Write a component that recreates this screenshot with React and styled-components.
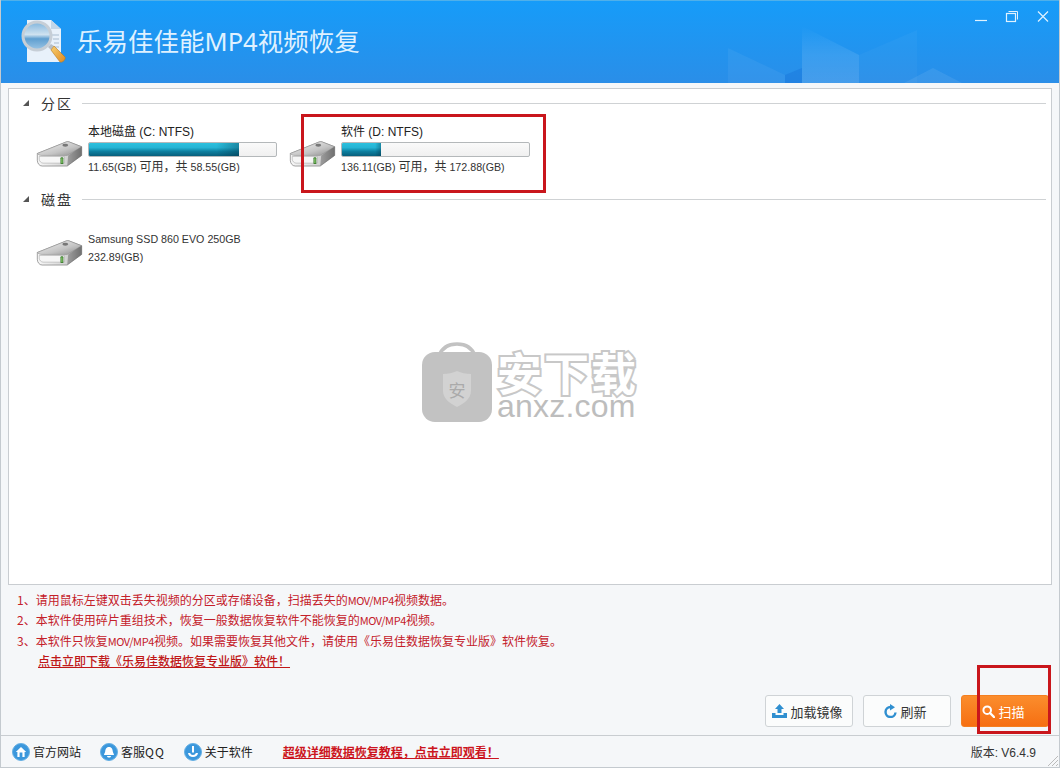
import React from 'react';
import styled, { createGlobalStyle } from 'styled-components';

const CJK = `"Liberation Sans", "Noto Sans CJK SC", sans-serif`;

const Global = createGlobalStyle`
  html, body { margin: 0; padding: 0; background: #f5f7f9; }
  * { box-sizing: border-box; }
`;

const Win = styled.div`
  position: relative; width: 1060px; height: 768px; overflow: hidden;
  display: flex; flex-direction: column;
  background: #f5f7f9; font-family: ${CJK}; color: #222;
  border-left: 1px solid #c4cacf; border-right: 1px solid #c4cacf; border-bottom: 1px solid #c4cacf;
`;
const Header = styled.header`
  position: relative; flex: 0 0 83px; display: flex; align-items: center;
  padding: 0 0 0 20px; gap: 10px; overflow: hidden;
  background: linear-gradient(180deg, #169cf9 0%, #2a8ee8 100%);
  border-top: 1px solid #4fb0ea;
`;
const Title = styled.h1`
  position: relative; margin: 0; font-size: 25.5px; font-weight: 400; color: #dff1ff; line-height: 1; letter-spacing: 0;
  font-family: "Noto Sans", "Noto Sans CJK SC", sans-serif;
`;
const LogoSvg = styled.svg`position: relative; flex: none;`;
const Decor = styled.svg`position: absolute; left: 0; top: 0;`;
const WinControls = styled.div`
  position: absolute; top: 9px; right: 9px; display: flex; gap: 17px; align-items: flex-start;
`;
const Main = styled.main`
  flex: none; height: 652px; display: flex; flex-direction: column; padding: 5px 7px 0;
`;
const Panel = styled.section`
  position: relative; flex: 0 0 497px; background: #fff; border: 1px solid #c9cdd1; padding: 5px 5px 0 14px;
`;
const SectionHead = styled.div`
  display: flex; align-items: center; height: 18px;
`;
const Caret = styled.span`
  width: 0; height: 0; margin-right: 12px;
  border-left: 6px solid transparent; border-bottom: 6px solid #555;
`;
const SectionTitle = styled.span`
  font-size: 14px; letter-spacing: 2px; color: #333; width: 41px; white-space: nowrap;
  font-family: "Noto Sans CJK SC", sans-serif;
`;
const SectionRule = styled.span`flex: 1; height: 1px; background: #cfd2d4;`;
const Drives = styled.div`
  display: flex; height: ${p => p.$h}px; padding: ${p => p.$top}px 0 0 13px;
`;
const Drive = styled.div`
  width: 253px; display: flex; align-items: flex-start; gap: 5px;
`;
const DiskIcon = styled.svg`flex: none; margin-top: ${p => p.$top}px;`;
const DriveInfo = styled.div`width: 190px;`;
const DriveName = styled.div`
  font-size: 12px; line-height: 15px; height: 15px; color: #222; white-space: nowrap;
`;
const Bar = styled.div`
  width: 189px; height: 15px; margin: 2px 0 2px; border: 1px solid #b4b8ba; border-radius: 2px;
  background: linear-gradient(180deg, #fafafa, #f0f0f0); overflow: hidden;
`;
const BarFill = styled.div`
  height: 100%;
  background:
    linear-gradient(90deg, rgba(0,40,60,0) 85%, rgba(0,40,60,.35) 100%),
    linear-gradient(180deg, #2cc0de 0%, #25b4d4 35%, #0d7f9f 65%, #075f7c 100%);
`;
const DriveSub = styled.div`
  font-size: 10.7px; line-height: 16px; color: #333; white-space: nowrap; margin-top: ${p => p.$gap || 0}px;
`;
const DriveSubCn = styled.span`font-size: 12px;`;
const Watermark = styled.div`
  position: absolute; left: 413px; top: 253px; display: flex; gap: 5px; pointer-events: none;
`;
const WmText = styled.div`display: flex; flex-direction: column; margin-top: 8px;`;
const WmCn = styled.div`
  font-family: "Noto Sans CJK SC", sans-serif; font-weight: 700; font-size: 45px; line-height: 44px; letter-spacing: 2px;
  color: #fff; -webkit-text-stroke: 4px #c8c8c8; paint-order: stroke fill; white-space: nowrap;
`;
const WmEn = styled.div`
  font-family: "Liberation Sans", sans-serif; font-size: 32px; line-height: 24px; color: #bdbdbd; white-space: nowrap; letter-spacing: .2px;
`;
const Notes = styled.div`
  padding: 5px 0 0 9px; height: 110px; font-size: 12px; color: #c4202a;
  font-family: "Noto Sans CJK SC", sans-serif;
`;
const NoteLine = styled.div`
  height: 20.3px; line-height: 20px; white-space: nowrap;
`;
const Narrow = styled.span`font-size: 11px; letter-spacing: -.4px;`;
const NoteLink = styled.a`
  margin-left: 21px; color: #c01818; text-decoration: underline; font-weight: 500;
`;
const Actions = styled.div`
  display: flex; justify-content: flex-end; gap: 10px; padding-right: 3px; height: 39px;
`;
const Btn = styled.button`
  width: ${p => p.$w || 88}px; height: 32px; display: flex; align-items: center; justify-content: center; gap: 3px;
  border-radius: 3px; font-size: 13px; padding: 0 3px 0 0;
  font-family: "Noto Sans CJK SC", sans-serif;
  color: ${p => p.$primary ? '#fff' : '#333'};
  border: 1px solid ${p => p.$primary ? '#f47f20' : '#cfd3d6'};
  background: ${p => p.$primary ? 'linear-gradient(180deg,#fb8d2d,#f66f12)' : '#fbfcfc'};
`;
const Status = styled.footer`
  flex: 1; display: flex; align-items: center; padding: 0 23px 0 11px;
  border-top: 1px solid #c9cdd1; position: relative;
`;
const StatusItem = styled.a`
  display: flex; align-items: center; gap: 3px; font-size: 12px; color: #222; margin-right: 19px;
  font-family: "Noto Sans CJK SC", sans-serif;
`;
const Wide = styled.span`letter-spacing: 1px;`;
const Dot = styled.span`
  width: 18px; height: 18px; border-radius: 50%; background: #3b97dc; border: 1px solid #66b0e4;
  display: flex; align-items: center; justify-content: center;
`;
const TutLink = styled.a`
  margin-left: 11px; font-size: 12px; font-weight: 700; color: #cc1420; text-decoration: underline;
  font-family: "Noto Sans CJK SC", sans-serif;
`;
const Version = styled.span`margin-left: auto; font-size: 12px; color: #333;`;
const Grip = styled.svg`position: absolute; right: 0; bottom: 0;`;
const Callout = styled.div`
  position: absolute; left: ${p => p.$x}px; top: ${p => p.$y}px; width: ${p => p.$w}px; height: ${p => p.$h}px;
  border: 3px solid #c9161c; pointer-events: none;
`;

const Logo = () => (
  <LogoSvg width="46" height="50" viewBox="0 0 46 50">
    <defs>
      <linearGradient id="lens" x1="0" y1="0" x2="0" y2="1">
        <stop offset="0" stopColor="#7fb4dc" /><stop offset=".45" stopColor="#cfe2f0" />
        <stop offset=".6" stopColor="#5f9fd0" /><stop offset="1" stopColor="#9cc6e6" />
      </linearGradient>
      <linearGradient id="hdl" x1="0" y1="0" x2="1" y2="1">
        <stop offset="0" stopColor="#f8d070" /><stop offset="1" stopColor="#e08a20" />
      </linearGradient>
    </defs>
    <g transform="translate(0 2)">
      <path d="M6 1h24l10 9v33H6z" fill="#e8f1fa" />
      <path d="M30 1v9h10z" fill="#c2d6e8" />
      <path d="M31 16h7M32 20h6M33 24h5M33 28h5M31 32h2" stroke="#a8bccd" strokeWidth="1.2" />
      <circle cx="16" cy="17" r="14" fill="url(#lens)" stroke="#c6ced6" strokeWidth="3" />
      <path d="M27 28l3-3 3 2-3 4z" fill="#b6bec6" />
      <path d="M30 31l3-4 11 11c1 2-2 6-5 5z" fill="url(#hdl)" stroke="#b97a20" strokeWidth=".6" />
    </g>
  </LogoSvg>
);

const Disk = ({ top }) => (
  <DiskIcon $top={top} width="47" height="27" viewBox="0 0 48 28">
    <defs>
      <linearGradient id="dtop" x1="0" y1="0" x2="1" y2="1">
        <stop offset="0" stopColor="#f6f6f6" /><stop offset=".6" stopColor="#c4c4c4" /><stop offset="1" stopColor="#8a8a8a" />
      </linearGradient>
      <linearGradient id="dfr" x1="0" y1="0" x2="1" y2="0">
        <stop offset="0" stopColor="#f8f8f8" /><stop offset=".7" stopColor="#d0d0d0" /><stop offset="1" stopColor="#7a7a7a" />
      </linearGradient>
    </defs>
    <path d="M1 14L31 2c1-.5 2-.5 3 0l13 5v9l-15 11H6c-3 0-5-3-5-6z" fill="url(#dfr)" stroke="#777" strokeWidth=".7" />
    <path d="M1 14L31 2c1-.5 2-.5 3 0l13 5-15 9-26 0c-2 0-4-.5-5-2z" fill="url(#dtop)" stroke="#888" strokeWidth=".5" />
    <ellipse cx="30" cy="5.500" rx="3" ry="1.500" fill="#777" />
    <path d="M3 17h26v7H7c-2 0-4-2-4-4z" fill="#f6f6f6" stroke="#999" strokeWidth=".5" />
    <rect x="25" y="18" width="3" height="7" rx="1" fill="#3c7a30" />
    <rect x="26" y="19" width="1" height="5" fill="#9be07a" />
    <path d="M33 16l14-9v9L32 27z" fill="#666" opacity=".5" />
  </DiskIcon>
);

const Upload = () => (
  <svg width="15" height="14" viewBox="0 0 15 14">
    <path d="M7.500 0L12 5H9.500v4h-4V5H3z" fill="#2f8fd0" />
    <path d="M0 9h3.500v2h8V9H15v5H0z" fill="#2f8fd0" />
  </svg>
);
const Refresh = () => (
  <svg width="13" height="14" viewBox="0 0 13 14">
    <path d="M6.500 3a5 5 0 1 0 5 5.500" fill="none" stroke="#2f8fd0" strokeWidth="2.400" />
    <path d="M6 0l5 3.200L6 6.400z" fill="#2f8fd0" />
  </svg>
);
const Search = () => (
  <svg width="13" height="13" viewBox="0 0 13 13">
    <circle cx="5.200" cy="5.200" r="3.800" fill="none" stroke="#fff" strokeWidth="2" />
    <path d="M8 8l4 4" stroke="#fff" strokeWidth="2.400" strokeLinecap="round" />
  </svg>
);
const HomeGlyph = () => (
  <svg width="12" height="12" viewBox="0 0 12 12">
    <path d="M6 1L.8 6h1.600v5h7.200V6h1.600z" fill="#fff" /><rect x="4.600" y="6.500" width="2.800" height="4.500" fill="#3b97dc" />
  </svg>
);
const BellGlyph = () => (
  <svg width="12" height="12" viewBox="0 0 12 12">
    <path d="M6 1c3 0 3.600 2.500 3.800 4.500.2 1.500 1.200 2.300 1.200 3.500H1c0-1.200 1-2 1.200-3.500C2.400 3.500 3 1 6 1zM4 10h4c0 1-1 1.600-2 1.600S4 11 4 10z" fill="#fff" />
  </svg>
);
const InfoGlyph = () => (
  <svg width="12" height="13" viewBox="0 0 12 13">
    <path d="M5 1h2v6.500H5z" fill="#fff" /><path d="M1 8h2.200c.2 1.200 1.400 2 2.800 2s2.600-.8 2.800-2H11c-.3 2.400-2.400 4-5 4s-4.700-1.600-5-4z" fill="#fff" />
  </svg>
);

export default function App() {
  return (
    <>
      <Global />
      <Win>
        <Header>
          <Decor width="1060" height="83" viewBox="1 1 1060 83">
            <defs>
              <linearGradient id="fade" x1="0" y1="0" x2="0" y2="1">
                <stop offset="0" stopColor="#fff" stopOpacity="0" />
                <stop offset=".5" stopColor="#fff" stopOpacity=".1" />
                <stop offset="1" stopColor="#fff" stopOpacity=".13" />
              </linearGradient>
            </defs>
            <path d="M728 48l57 27v8h-57z" fill="#fff" opacity=".05" />
            <path d="M785 75l17-7v15h-17z" fill="#0a5fd0" opacity=".25" />
            <path d="M802 26l57 29v28h-57z" fill="url(#fade)" />
            <path d="M859 55l58-25v53h-58z" fill="#fff" opacity=".03" />
            <path d="M904 83l29-15 29 15z" fill="#fff" opacity=".08" />
          </Decor>
          <Logo />
          <Title>乐易佳佳能MP4视频恢复</Title>
          <WinControls>
            <svg width="14" height="14" viewBox="0 0 14 14"><path d="M1 10.500h12" stroke="#dff2ff" strokeWidth="1.200" /></svg>
            <svg width="14" height="14" viewBox="0 0 14 14" fill="none" stroke="#dff2ff"><rect x="1.500" y="3.500" width="9" height="8" strokeWidth="1.200" /><path d="M3.500 1.500h9v8" /></svg>
            <svg width="14" height="14" viewBox="0 0 14 14"><path d="M2 1.500l10 10M12 1.500l-10 10" stroke="#dff2ff" strokeWidth="1.200" /></svg>
          </WinControls>
        </Header>
        <Main>
          <Panel>
            <SectionHead><Caret /><SectionTitle>分区</SectionTitle><SectionRule /></SectionHead>
            <Drives $h="78" $top="13">
              <Drive>
                <Disk top={15} />
                <DriveInfo>
                  <DriveName>本地磁盘 (C: NTFS)</DriveName>
                  <Bar><BarFill style={{ width: '80%' }} /></Bar>
                  <DriveSub>11.65(GB) <DriveSubCn>可用，共</DriveSubCn> 58.55(GB)</DriveSub>
                </DriveInfo>
              </Drive>
              <Drive>
                <Disk top={15} />
                <DriveInfo>
                  <DriveName>软件 (D: NTFS)</DriveName>
                  <Bar><BarFill style={{ width: '21%' }} /></Bar>
                  <DriveSub>136.11(GB) <DriveSubCn>可用，共</DriveSubCn> 172.88(GB)</DriveSub>
                </DriveInfo>
              </Drive>
            </Drives>
            <SectionHead><Caret /><SectionTitle>磁盘</SectionTitle><SectionRule /></SectionHead>
            <Drives $h="80" $top="23">
              <Drive>
                <Disk top={8} />
                <DriveInfo>
                  <DriveSub>Samsung SSD 860 EVO 250GB</DriveSub>
                  <DriveSub $gap={2}>232.89(GB)</DriveSub>
                </DriveInfo>
              </Drive>
            </Drives>
            <Watermark>
              <svg width="70" height="80" viewBox="0 0 70 80">
                <path d="M17 14C20 5 27 2 35 2s15 3 18 12" fill="none" stroke="#c2c2c2" strokeWidth="3.500" />
                <rect x="0" y="10" width="70" height="70" rx="13" fill="#c2c2c2" />
                <path d="M21 32c5 0 10-1 14-3 4 2 9 3 14 3v17c0 8-8 13-14 16-6-3-14-8-14-16z" fill="#d2d2d2" />
                <text x="35" y="55" textAnchor="middle" fontSize="17" fill="#aaa" fontFamily="Noto Sans CJK SC, sans-serif">安</text>
              </svg>
              <WmText>
                <WmCn>安下载</WmCn>
                <WmEn>anxz.com</WmEn>
              </WmText>
            </Watermark>
          </Panel>
          <Notes>
            <NoteLine>1、请用鼠标左键双击丢失视频的分区或存储设备，扫描丢失的<Narrow>MOV/MP4</Narrow>视频数据。</NoteLine>
            <NoteLine>2、本软件使用碎片重组技术，恢复一般数据恢复软件不能恢复的<Narrow>MOV/MP4</Narrow>视频。</NoteLine>
            <NoteLine>3、本软件只恢复<Narrow>MOV/MP4</Narrow>视频。如果需要恢复其他文件，请使用《乐易佳数据恢复专业版》软件恢复。</NoteLine>
            <NoteLine><NoteLink>点击立即下载《乐易佳数据恢复专业版》软件！</NoteLink></NoteLine>
          </Notes>
          <Actions>
            <Btn><Upload />加载镜像</Btn>
            <Btn><Refresh />刷新</Btn>
            <Btn $primary><Search />扫描</Btn>
          </Actions>
        </Main>
        <Status>
          <StatusItem><Dot><HomeGlyph /></Dot>官方网站</StatusItem>
          <StatusItem><Dot><BellGlyph /></Dot><span>客服<Wide>QQ</Wide></span></StatusItem>
          <StatusItem><Dot><InfoGlyph /></Dot>关于软件</StatusItem>
          <TutLink>超级详细数据恢复教程，点击立即观看！</TutLink>
          <Version>版本: V6.4.9</Version>
          <Grip width="14" height="14" viewBox="0 0 14 14"><path d="M13 3L3 13M13 7l-6 6M13 11l-2 2" stroke="#bbb" /></Grip>
        </Status>
        <Callout $x={300} $y={114} $w={245} $h={79} />
        <Callout $x={976} $y={665} $w={74} $h={69} />
      </Win>
    </>
  );
}
